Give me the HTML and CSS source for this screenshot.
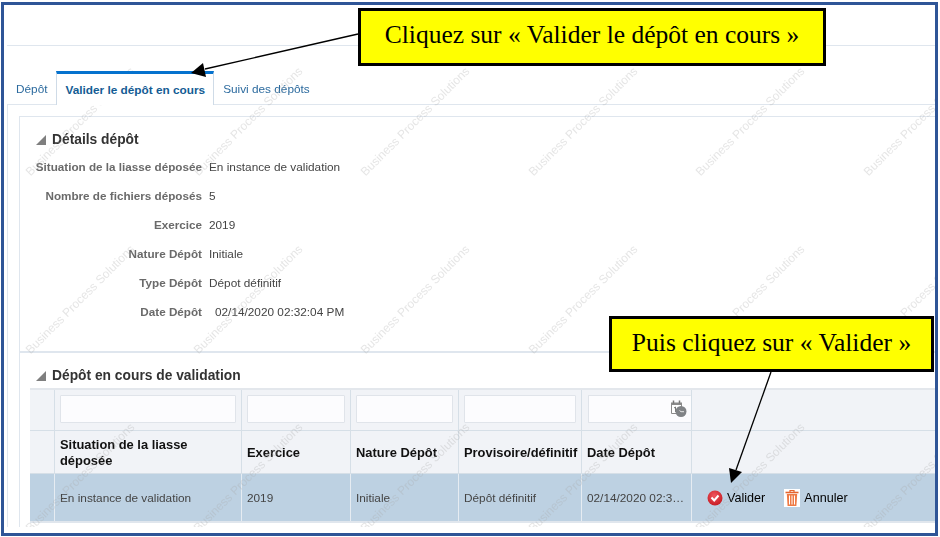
FILE: index.html
```html
<!DOCTYPE html>
<html lang="fr">
<head>
<meta charset="utf-8">
<title>Valider le dépôt en cours</title>
<link rel="stylesheet" href="styles.css">
</head>
<body>
<div class="frame">
  <div class="app">
    <div class="topbar"></div>
    <nav class="tabs">
      <a class="tab first">Dépôt</a>
      <a class="tab active">Valider le dépôt en cours</a>
      <a class="tab">Suivi des dépôts</a>
    </nav>
    <div class="outer">
      <div class="inner">
        <section class="details">
          <h2 class="section-title"><span class="tri"></span>Détails dépôt</h2>
          <dl class="form">
            <dt>Situation de la liasse déposée</dt><dd>En instance de validation</dd>
            <dt>Nombre de fichiers déposés</dt><dd>5</dd>
            <dt>Exercice</dt><dd>2019</dd>
            <dt>Nature Dépôt</dt><dd>Initiale</dd>
            <dt>Type Dépôt</dt><dd>Dépot définitif</dd>
            <dt>Date Dépôt</dt><dd class="date">02/14/2020 02:32:04 PM</dd>
          </dl>
        </section>
        <section class="pending">
          <h2 class="section-title"><span class="tri"></span>Dépôt en cours de validation</h2>
          <div class="grid">
            <div class="cell filter"></div>
            <div class="cell filter"><span class="input"></span></div>
            <div class="cell filter"><span class="input"></span></div>
            <div class="cell filter"><span class="input"></span></div>
            <div class="cell filter"><span class="input"></span></div>
            <div class="cell filter date-filter">
              <span class="input">
                <svg class="cal" width="17" height="17" viewBox="0 0 17 17">
                  <path d="M1.500 3.500h10v10h-10z" fill="#fff" stroke="#8a8a8a"/>
                  <path d="M1 2.500h11v2.500H1z" fill="#8a8a8a"/>
                  <path d="M3.500 0.500v3M9.500 0.500v3" stroke="#777" stroke-width="1.500"/>
                  <path d="M4 8l1.500-1v5" fill="none" stroke="#777"/>
                  <circle cx="11" cy="11.500" r="5.500" fill="#808386"/>
                  <path d="M9.500 10.500l1.500 1.200h3" fill="none" stroke="#e6e6e6"/>
                </svg>
              </span>
            </div>
            <div class="cell filter last"></div>

            <div class="cell head"></div>
            <div class="cell head">Situation de la liasse déposée</div>
            <div class="cell head">Exercice</div>
            <div class="cell head">Nature Dépôt</div>
            <div class="cell head">Provisoire/définitif</div>
            <div class="cell head">Date Dépôt</div>
            <div class="cell head last"></div>

            <div class="cell data"></div>
            <div class="cell data">En instance de validation</div>
            <div class="cell data">2019</div>
            <div class="cell data">Initiale</div>
            <div class="cell data">Dépôt définitif</div>
            <div class="cell data">02/14/2020 02:3…</div>
            <div class="cell data last actions">
              <a class="action">
                <svg width="16" height="16" viewBox="0 0 16 16">
                  <defs><radialGradient id="red" cx="45%" cy="35%" r="70%"><stop offset="0" stop-color="#f0565f"/><stop offset="1" stop-color="#c4181f"/></radialGradient></defs>
                  <circle cx="8" cy="8" r="7.500" fill="url(#red)"/>
                  <path d="M4.500 7.500l2.700 3 4.300-5" fill="none" stroke="#fff" stroke-width="2"/>
                </svg>
                Valider
              </a>
              <a class="action">
                <svg class="trash" width="16" height="18" viewBox="0 0 16 18">
                  <rect width="16" height="18" fill="#fff"/>
                  <path d="M1.500 3.500h13" stroke="#e4652f" stroke-width="1.600"/>
                  <path d="M6 3V1.500h4V3" fill="none" stroke="#e4652f" stroke-width="1.200"/>
                  <path d="M2.800 5h10.400l-.8 12H3.600z" fill="#ee7a45"/>
                  <path d="M5.500 6.500v9M8 6.500v9M10.500 6.500v9" stroke="#fff" stroke-width="1"/>
                </svg>
                Annuler
              </a>
            </div>
          </div>
        </section>
      </div>
    </div>
    <div class="watermarks" aria-hidden="true">
      <span>Business Process Solutions</span><span>Business Process Solutions</span><span>Business Process Solutions</span><span>Business Process Solutions</span><span>Business Process Solutions</span><span>Business Process Solutions</span>
      <span>Business Process Solutions</span><span>Business Process Solutions</span><span>Business Process Solutions</span><span>Business Process Solutions</span><span>Business Process Solutions</span><span>Business Process Solutions</span>
      <span>Business Process Solutions</span><span>Business Process Solutions</span><span>Business Process Solutions</span><span>Business Process Solutions</span><span>Business Process Solutions</span><span>Business Process Solutions</span>
    </div>
  </div>
  <svg class="arrows" width="940" height="537" viewBox="0 0 940 537">
    <path d="M358 34L205 69" stroke="#000" stroke-width="1.300"/>
    <path d="M191 73L203 63L206 77z" fill="#000"/>
    <path d="M771 372L736 470" stroke="#000" stroke-width="1.300"/>
    <path d="M731 483L729 468L742 472z" fill="#000"/>
  </svg>
  <div class="callout callout-a">Cliquez sur « Valider le dépôt en cours »</div>
  <div class="callout callout-b">Puis cliquez sur « Valider »</div>
</div>
</body>
</html>
```
FILE: styles.css
```css
* { box-sizing: border-box; }
html, body { margin: 0; padding: 0; background: #fff; }
body { width: 940px; height: 537px; overflow: hidden; font-family: "Liberation Sans", Arial, sans-serif; font-size: 11.800px; color: #444; }

.frame { position: relative; width: 937px; height: 534px; margin: 2px 0 0 1px; border: 3px solid #2f5597; background: #fff; }
.app { position: relative; height: 522px; padding-left: 3px; overflow: hidden; filter: blur(0.3px); }

.topbar { height: 41px; border-bottom: 1px solid #dfe6ee; }

.tabs { display: flex; align-items: stretch; height: 58px; padding: 25px 0 0 0; }
.tab { display: flex; align-items: center; height: 33px; padding: 2px 8px 0 9px; color: #2b6a9e; }
.tab.first { padding-right: 9px; }
.tab.active { height: 34px; padding: 0 8px; margin-bottom: -1px; background: #fff; border: solid #cfdbe7; border-width: 3px 1px 0; border-top-color: #0572ce; color: #145c94; font-weight: bold; position: relative; z-index: 1; }

.outer { height: 424px; padding: 11px 0 0 11px; border: solid #dfe6ee; border-width: 1px 0 0 1px; }
.inner { height: 412px; border: solid #dfe6ee; border-width: 1px 0 0 1px; }

.details { height: 234px; padding-top: 14px; }
.section-title { display: flex; align-items: center; gap: 6px; margin: 0 0 0 16px; height: 17px; font-size: 13.800px; font-weight: bold; color: #333; }
.tri { width: 0; height: 0; border-style: solid; border-width: 0 0 10px 10px; border-color: transparent transparent #7f7f7f transparent; margin-top: 1px; }

.form { display: grid; grid-template-columns: 182px 1fr; grid-auto-rows: 29px; column-gap: 7px; margin: 4px 0 0 0; align-items: center; }
.form dt { text-align: right; color: #6a6a6a; font-size: 11.700px; font-weight: bold; }
.form dd { margin: 0; color: #444; }
.form dd.date { padding-left: 6px; }

.pending { border-top: 2px solid #dfe6ee; padding-top: 14px; }
.pending .section-title { margin-bottom: 4px; }

.grid { display: grid; grid-template-columns: 25px 187px 109px 108px 123px 110px 1fr; grid-template-rows: 41px 43px 47px; margin-left: 10px; width: 907px; border-top: 2px solid #e3e7ec; border-bottom: 2px solid #e0e6ed; }
.cell { border-right: 1px solid #d6dfe7; }
.cell.last { border-right: 0; }
.filter, .head { background: #f1f3f7; border-bottom: 1px solid #d6dfe7; }
.filter { padding: 5px 5px 0 5px; }
.input { display: block; position: relative; height: 28px; background: #fcfcfe; border: 1px solid #e0e4ea; border-radius: 1px; }
.cell.date-filter { padding: 5px 0 0 6px; }
.date-filter .input { border-right: 0; }
.cal { position: absolute; right: 4px; top: 4px; }

.head { display: flex; align-items: center; padding: 2px 5px 0; font-size: 12.900px; font-weight: bold; color: #111; line-height: 16px; }
.data { display: flex; align-items: center; padding: 0 5px; background: #bdd1e2; color: #444; border-right-color: #e6ecf2; white-space: nowrap; }

.actions { padding: 0 0 0 15px; gap: 19px; }
.action { display: flex; align-items: center; gap: 4px; color: #000; font-size: 12.600px; }

.watermarks { position: absolute; left: 3px; top: 0; right: 0; bottom: 0; display: grid; grid-template-columns: repeat(6, 167.500px); grid-template-rows: repeat(3, 178px); padding-top: 72px; pointer-events: none; }
.watermarks span { justify-self: start; width: 150px; height: 12px; font-size: 12px; line-height: 12px; white-space: nowrap; color: rgba(170, 170, 170, 0.3); transform-origin: 0 100%; transform: translate(25px, 89px) rotate(-45deg); }

.arrows { position: absolute; left: -4px; top: -5px; pointer-events: none; }

.callout { position: absolute; display: flex; align-items: center; justify-content: center; padding-bottom: 3px; background: #ff0; border: 3px solid #000; font-family: "Liberation Serif", "Times New Roman", serif; color: #000; font-size: 25.500px; white-space: nowrap; }
.callout-a { left: 354px; top: 3px; width: 468px; height: 58px; padding-bottom: 5px; }
.callout-b { left: 605px; top: 311px; width: 325px; height: 56px; }
```
